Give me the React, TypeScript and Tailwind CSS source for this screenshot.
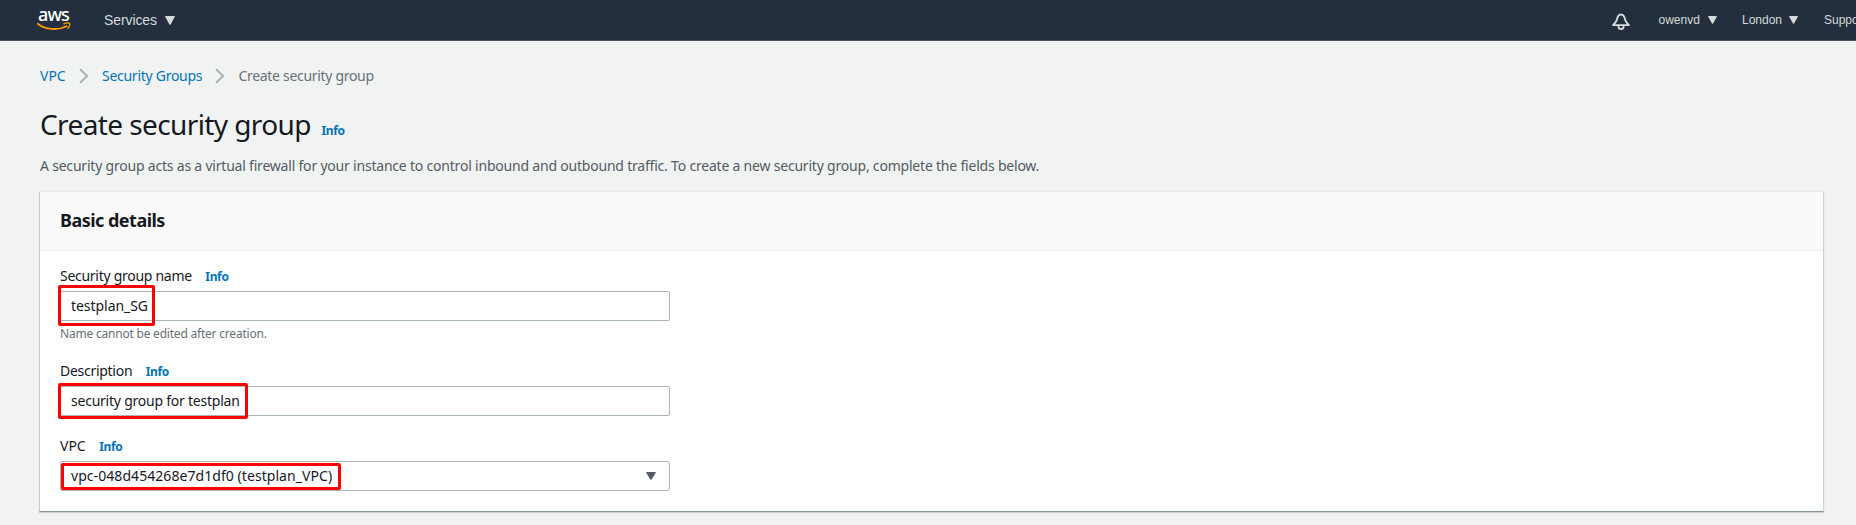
import React from "react";

function Caret({ className }: { className: string }) {
  return (
    <svg viewBox="0 0 10 9" preserveAspectRatio="none" className={className}>
      <path d="M0.6 0H9.4Q10 0 9.8 0.8L5.6 8.5Q5 9.2 4.4 8.5L0.2 0.8Q0 0 0.6 0Z" fill="currentColor" />
    </svg>
  );
}

function Chevron() {
  return (
    <svg viewBox="0 0 10 16" className="h-4 w-2.5 shrink-0" fill="none" stroke="#aab7b8" strokeWidth="2">
      <path d="M1 1.2L8.2 8L1 14.8" />
    </svg>
  );
}

function Info() {
  return <a className="text-[12px] leading-4 font-bold tracking-[-0.35px] text-[#0073bb]">Info</a>;
}

function Label({ children }: { children: React.ReactNode }) {
  return <div className="flex h-[22px] items-baseline gap-[13.5px] text-[14px] leading-[22px]">{children}</div>;
}

function Logo() {
  return (
    <div className="flex h-10 w-[34px] flex-col pt-[3px] text-white">
      <span className="h-[19px] pl-px text-[18px] leading-[23px] font-medium tracking-[-0.9px]">aws</span>
      <svg viewBox="0 0 34 9" className="h-[9px] w-[34px] shrink-0">
        <path d="M0.6 1.8C8.5 7.8 21 8.6 29.6 4.2" fill="none" stroke="#ff9900" strokeWidth="1.8" strokeLinecap="round" />
        <path d="M26.8 1.9C29 1.1 32 0.9 32.6 1.5C33.2 2.4 32.2 4.8 30.8 6.5" fill="none" stroke="#ff9900" strokeWidth="1.2" strokeLinecap="round" />
      </svg>
    </div>
  );
}

function Bell() {
  return (
    <svg viewBox="0 0 18 18" className="mt-[13px] h-[18px] w-[18px] shrink-0" fill="none" stroke="#d5dbdb" strokeWidth="1.8" strokeLinejoin="round">
      <path d="M9 1.3C6.8 1.7 5.6 3.2 5.3 5.2C4.8 8.6 4.2 9.6 1 12.1H17C13.8 9.6 13.2 8.6 12.7 5.2C12.4 3.2 11.2 1.7 9 1.3Z" />
      <path d="M6.4 12.4V13.4A2.6 2.6 0 0 0 11.6 13.4V12.4" />
    </svg>
  );
}

export default function App() {
  return (
    <div className="h-[525px] w-[1856px] overflow-hidden bg-[#f1f3f3] font-['Noto_Sans',sans-serif] text-[#16191f]">
      <header className="flex h-[41px] overflow-hidden border-b border-[#4a525e] bg-[#232f3e] pl-[37px] text-[#d5dbdb]">
        <Logo />
        <nav className="flex flex-1 font-['Liberation_Sans',sans-serif]">
          <div className="ml-[33px] flex">
            <span className="w-[53px] text-[14px] leading-[40px] tracking-[-0.1px]">Services</span>
            <Caret className="mt-4 ml-2 h-[9px] w-2.5" />
          </div>
          <div className="ml-auto flex w-[244px] shrink-0 text-[12px] leading-[40px]">
            <Bell />
            <span className="ml-[28.5px] w-[41.5px] shrink-0">owenvd</span>
            <Caret className="mt-4 ml-[7.5px] h-2 w-[9px] shrink-0" />
            <span className="ml-[25.5px] w-10 shrink-0">London</span>
            <Caret className="mt-4 ml-[7px] h-2 w-[9px] shrink-0" />
            <span className="ml-[26px] shrink-0">Support</span>
          </div>
        </nav>
      </header>

      <main className="px-10 pt-6">
        <div className="flex items-center text-[14px] leading-[22px]">
          <a className="w-[26px] text-[#0073bb]">VPC</a>
          <span className="mr-[13px] ml-[13px] flex"><Chevron /></span>
          <a className="w-[100px] tracking-[-0.27px] whitespace-nowrap text-[#0073bb]">Security Groups</a>
          <span className="mr-[13.5px] ml-[13px] flex"><Chevron /></span>
          <span className="tracking-[-0.31px] text-[#687078]">Create security group</span>
        </div>

        <div className="mt-[19px] flex h-9 items-baseline gap-[10.5px]">
          <h1 className="text-[28px] leading-9 tracking-[-0.6px]">Create security group</h1>
          <Info />
        </div>

        <p className="mt-[13px] text-[14px] leading-[22px] tracking-[-0.205px] text-[#545b64]">
          A security group acts as a virtual firewall for your instance to control inbound and outbound traffic. To create a new security group, complete the fields below.
        </p>

        <section className="-mx-px mt-[14px] h-[321px] w-[1785px] border border-t-[#eaeded] border-r-[#ccd1d1] border-b-[#879596] border-l-[#c8cdce] bg-white shadow-[0_1px_1px_0_rgba(0,28,36,0.15)]">
          <div className="h-[59px] border-b border-[#eaeded] bg-[#fafafa] px-5 pt-[17px]">
            <h2 className="text-[18px] leading-[22px] font-bold tracking-[-0.52px]">Basic details</h2>
          </div>
          <div className="w-[650px] px-5 pt-[14px]">
            <Label>
              <span className="tracking-[-0.28px]">Security group name</span>
              <Info />
            </Label>
            <div className="relative mt-1 h-[30px] rounded-[2px] border border-[#aab7b8] px-2.5 pt-[3px] text-[14px] leading-[22px]">
              <span className="tracking-[-0.05px]">testplan_SG</span>
              <div className="absolute -top-[7px] -left-[3px] h-[41px] w-[97px] rounded-[2px] border-3 border-[#ff0000]" />
            </div>
            <p className="mt-[4px] text-[12px] leading-[18px] tracking-[-0.21px] text-[#687078]">Name cannot be edited after creation.</p>

            <div className="mt-[17px]">
              <Label>
                <span className="tracking-[-0.28px]">Description</span>
                <Info />
              </Label>
            </div>
            <div className="relative mt-1 h-[30px] rounded-[2px] border border-[#aab7b8] px-2.5 pt-[3px] text-[14px] leading-[22px]">
              <span className="tracking-[-0.23px]">security group for testplan</span>
              <div className="absolute -top-[4px] -left-[3px] h-[36px] w-[190px] rounded-[2px] border-3 border-[#ff0000]" />
            </div>

            <div className="mt-[19px]">
              <Label>
                <span>VPC</span>
                <Info />
              </Label>
            </div>
            <div className="relative mt-1 flex h-[30px] justify-between rounded-[2px] border border-[#aab7b8] pt-[3px] pr-[13px] pl-2.5 text-[14px] leading-[22px]">
              <span className="tracking-[0.06px]">vpc-048d454268e7d1df0 (testplan_VPC)</span>
              <Caret className="mt-[7px] h-2 w-2.5 text-[#545b64]" />
              <div className="absolute top-px left-0 h-[27px] w-[280px] rounded-[2px] border-3 border-[#ff0000]" />
            </div>
          </div>
        </section>
      </main>
    </div>
  );
}
